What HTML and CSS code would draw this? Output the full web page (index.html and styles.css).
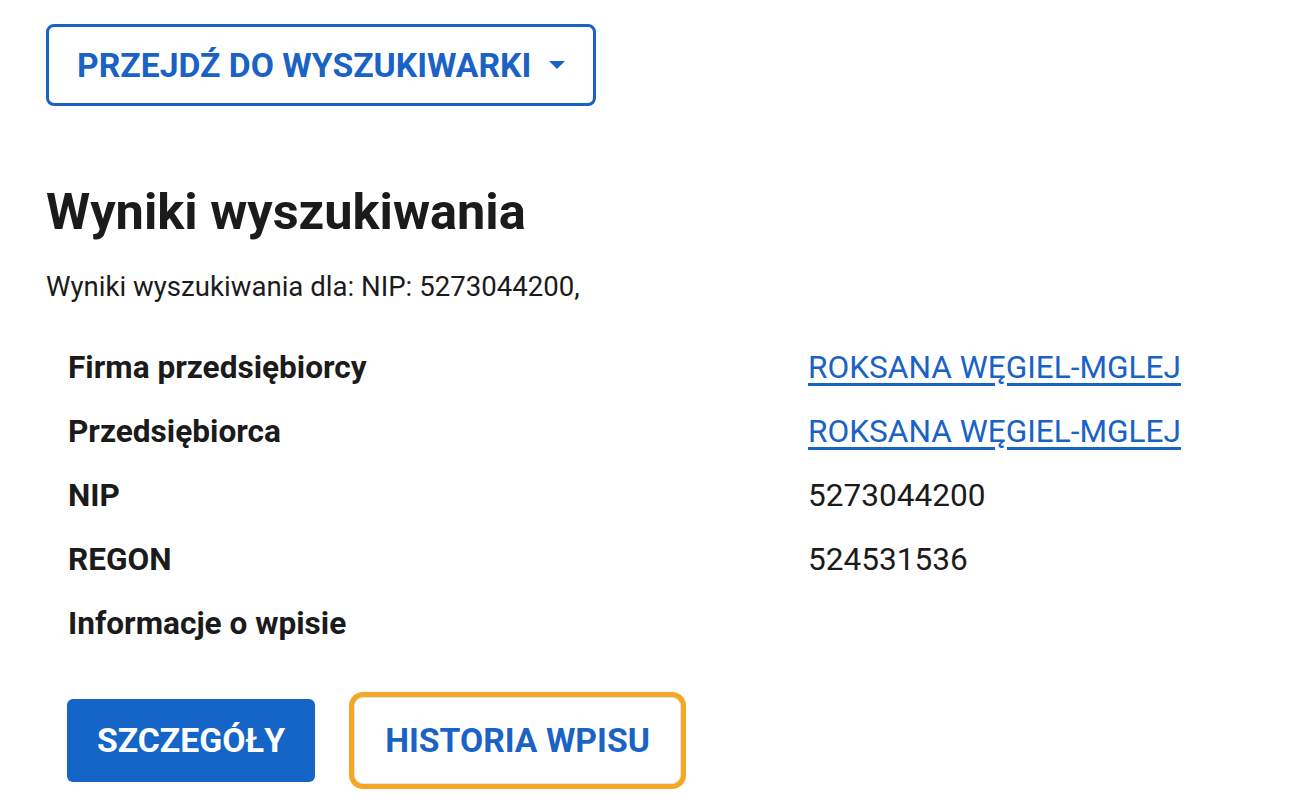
FILE: index.html
```html
<!DOCTYPE html>
<html lang="pl">
<head>
<meta charset="utf-8">
<title>Wyniki wyszukiwania</title>
<link rel="stylesheet" href="styles.css">
</head>
<body>
<main class="page">
  <button class="btn-outline btn-search" type="button">
    <span>PRZEJDŹ DO WYSZUKIWARKI</span>
    <svg class="caret" width="16" height="8" viewBox="0 0 16 8"><path d="M0 0H16L8 8Z" fill="currentColor"/></svg>
  </button>
  <h1 class="title">Wyniki wyszukiwania</h1>
  <p class="subtitle">Wyniki wyszukiwania dla: NIP: 5273044200,</p>
  <dl class="results">
    <dt>Firma przedsiębiorcy</dt><dd><a href="#">ROKSANA WĘGIEL-MGLEJ</a></dd>
    <dt>Przedsiębiorca</dt><dd><a href="#">ROKSANA WĘGIEL-MGLEJ</a></dd>
    <dt>NIP</dt><dd>5273044200</dd>
    <dt>REGON</dt><dd>524531536</dd>
    <dt>Informacje o wpisie</dt><dd></dd>
  </dl>
  <div class="actions">
    <button class="btn-filled" type="button">SZCZEGÓŁY</button>
    <span class="focus-ring"><button class="btn-plain" type="button">HISTORIA WPISU</button></span>
  </div>
</main>
</body>
</html>
```
FILE: styles.css
```css
* { box-sizing: border-box; }
html, body { margin: 0; background: #fff; }
body { font-family: Roboto, "Noto Sans", Arial, sans-serif; color: #1b1b1b; }
.page { padding: 24px 0 0 46px; }

.btn-search {
  display: inline-flex; align-items: center;
  height: 82px; width: 550px; padding: 0 28px 0 28px;
  background: #fff; border: 3px solid #1a62c5; border-radius: 8px;
  color: #1a62c5; font: 700 33.7px Roboto, sans-serif;
}
.caret { display: block; margin-left: auto; }

.title { margin: 76px 0 0; font-size: 50.5px; font-weight: 700; line-height: 60px; color: #1b1b1b; }
.subtitle { margin: 29px 0 0; font-size: 27.6px; line-height: 32px; color: #1b1b1b; }

.results {
  display: grid; grid-template-columns: 740px auto; grid-auto-rows: 64px;
  align-items: center; margin: 32px 0 0 22px;
}
.results dt { font-size: 31.6px; font-weight: 700; }
.results dd { margin: 0; font-size: 31.6px; }
.results a { color: #1a62c5; text-decoration: underline; text-underline-offset: 5px; }

.actions { display: flex; align-items: center; gap: 34px; margin: 37px 0 0 21px; }
.btn-filled {
  width: 248px; height: 83px; border: none; border-radius: 6px;
  background: #1565c8; color: #fff; font: 700 33.7px Roboto, sans-serif;
}
.focus-ring { display: inline-flex; padding: 5px; border-radius: 14px; background: #f5a623; }
.btn-plain {
  width: 327px; height: 87px; border: 1px solid #e6e6e6; border-radius: 9px;
  background: #fff; color: #1a62c5; font: 700 33.7px Roboto, sans-serif;
}
```
